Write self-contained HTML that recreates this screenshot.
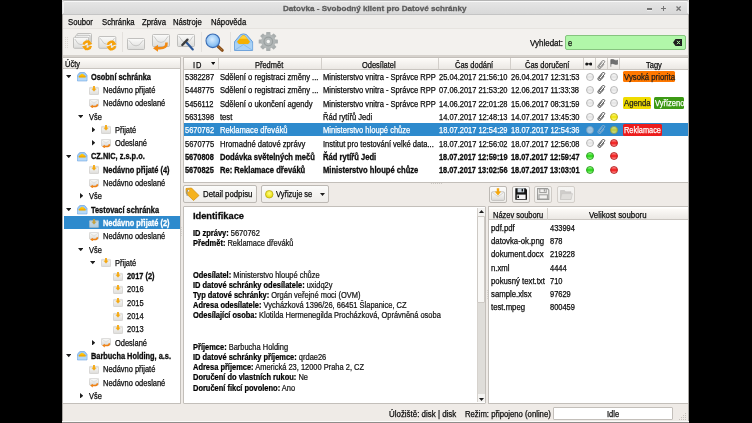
<!DOCTYPE html><html><head><meta charset="utf-8"><style>
*{margin:0;padding:0;box-sizing:border-box}
html,body{width:752px;height:423px;overflow:hidden;background:#000;font-family:"Liberation Sans", sans-serif;font-size:8px;color:#0c0c0c}
.a{position:absolute}
.t{position:absolute;white-space:nowrap;line-height:13.3px;height:13.3px;font-size:8.3px;-webkit-text-stroke:0.25px currentColor;transform:scaleX(0.9) translateZ(0);transform-origin:0 50%;margin-top:1px}
.n{transform:scaleX(0.9) translateZ(0)}
.b{font-weight:bold;-webkit-text-stroke:0.3px currentColor;transform:scaleX(0.89) translateZ(0)}
.win{position:absolute;left:62px;top:0;width:626.5px;height:423px;background:#efebe7;overflow:hidden}
.pan{position:absolute;background:#fff;border:1px solid #c3bfba}
.hdr{position:absolute;background:linear-gradient(#fcfaf7,#ebe8e4);border-top:0.6px solid #fffdfa;border-bottom:1px solid #c9c5c0}
.sep{position:absolute;width:1px;background:#d3cfca}
.btn{position:absolute;border:1px solid #bdb9b4;border-radius:2px;background:linear-gradient(#fbfbfa,#efedea)}
.sel{position:absolute;background:#2e8acd}
.w{color:#fff}
</style></head><body>
<div class="win">
<svg width="0" height="0" style="position:absolute"><defs><linearGradient id="tg" x1="0" y1="0" x2="0" y2="1"><stop offset="0" stop-color="#fbfbfa"/><stop offset="1" stop-color="#dddcd9"/></linearGradient></defs></svg>
<div class="a" style="left:0;top:0;width:626.5px;height:15px;background:linear-gradient(#e6e6e6,#d8d8d8);border-top:1px solid #b4b4b4;border-bottom:0.6px solid #c4c4c4;border-radius:2px 2px 0 0"></div>
<div class="a" style="left:1px;top:1px;width:624.5px;height:12px;border-top:1px solid #f8f8f8;border-left:1px solid #f2f2f2;border-right:1px solid #f2f2f2;border-radius:2px 2px 0 0"></div>
<div class="t b" style="left:221px;top:0.5px;color:#5c5c5c;font-size:8.1px;line-height:13px;transform:translateZ(0)">Datovka - Svobodný klient pro Datové schránky</div>
<div class="a" style="left:584.6px;top:8.4px;width:5.4px;height:1.3px;background:#747474;box-shadow:0 0.8px 0 #f4f4f4"></div>
<div class="a" style="left:599px;top:7.7px;width:5px;height:1.3px;background:#747474"></div>
<div class="a" style="left:600.85px;top:5.8px;width:1.3px;height:5px;background:#747474"></div>
<svg class="a" style="left:613.5px;top:5.8px" width="5.2" height="5.2" viewBox="0 0 5.2 5.2"><path d="M0.5 0.5L4.7 4.7M4.7 0.5L0.5 4.7" stroke="#747474" stroke-width="1.3"/></svg>
<div class="a" style="left:0;top:15px;width:626.5px;height:13px;background:#efedea"></div>
<div class="t" style="left:6.3px;top:14.8px;transform:scaleX(0.93) translateZ(0)">Soubor</div>
<div class="t" style="left:39.6px;top:14.8px;transform:scaleX(0.93) translateZ(0)">Schránka</div>
<div class="t" style="left:79.5px;top:14.8px;transform:scaleX(0.93) translateZ(0)">Zpráva</div>
<div class="t" style="left:111.4px;top:14.8px;transform:scaleX(0.93) translateZ(0)">Nástroje</div>
<div class="t" style="left:149.1px;top:14.8px;transform:scaleX(0.93) translateZ(0)">Nápověda</div>
<div class="a" style="left:0;top:28px;width:626.5px;height:26.6px;background:#f3f1ee;border-top:0.5px solid #e6e3df"></div>
<div class="a" style="left:0;top:54.8px;width:626.5px;height:2.6px;background:#d6d2cd"></div>
<svg class="a" style="left:3.3px;top:37px" width="3" height="12"><rect x="0" y="0" width="1" height="1" fill="#dcd8d3"/><rect x="0" y="2" width="1" height="1" fill="#dcd8d3"/><rect x="0" y="4" width="1" height="1" fill="#dcd8d3"/><rect x="0" y="6" width="1" height="1" fill="#dcd8d3"/><rect x="0" y="8" width="1" height="1" fill="#dcd8d3"/><rect x="0" y="10" width="1" height="1" fill="#dcd8d3"/><rect x="2" y="0" width="1" height="1" fill="#dcd8d3"/><rect x="2" y="2" width="1" height="1" fill="#dcd8d3"/><rect x="2" y="4" width="1" height="1" fill="#dcd8d3"/><rect x="2" y="6" width="1" height="1" fill="#dcd8d3"/><rect x="2" y="8" width="1" height="1" fill="#dcd8d3"/><rect x="2" y="10" width="1" height="1" fill="#dcd8d3"/></svg>
<div class="a" style="left:60px;top:32px;width:1px;height:20px;background:#e3e0dc"></div>
<div class="a" style="left:139px;top:32px;width:1px;height:20px;background:#e3e0dc"></div>
<div class="a" style="left:167.7px;top:32px;width:1px;height:20px;background:#e3e0dc"></div>
<svg class="a" style="left:0;top:0" width="626" height="56"><defs><linearGradient id="eg" x1="0" y1="0" x2="0" y2="1"><stop offset="0" stop-color="#fbfbfa"/><stop offset="1" stop-color="#dcdcda"/></linearGradient><radialGradient id="mg" cx="0.45" cy="0.4" r="0.65"><stop offset="0" stop-color="#d8ecff"/><stop offset="0.7" stop-color="#8ec3f4"/><stop offset="1" stop-color="#5d9ae0"/></radialGradient><radialGradient id="gg" cx="0.5" cy="0.5" r="0.5"><stop offset="0" stop-color="#c8c8c8"/><stop offset="1" stop-color="#8e8e8e"/></radialGradient></defs><rect x="15.0" y="33.5" width="14.5" height="10" rx="1" fill="url(#eg)" stroke="#b2b2b0" stroke-width="0.8"/><path d="M16.3 35.2 L19.46 39.38 Q22.25 40.92 25.04 39.38 L28.2 35.2" fill="none" stroke="#b9b9b7" stroke-width="0.7"/><rect x="13.5" y="35.3" width="14.5" height="10.5" rx="1" fill="url(#eg)" stroke="#b2b2b0" stroke-width="0.8"/><path d="M14.8 37.0 L17.96 41.47 Q20.75 43.08 23.54 41.47 L26.7 37.0" fill="none" stroke="#b9b9b7" stroke-width="0.7"/><rect x="11.5" y="37.3" width="15" height="11" rx="1" fill="url(#eg)" stroke="#b2b2b0" stroke-width="0.8"/><path d="M12.8 39.0 L16.12 43.76 Q19.0 45.44 21.880000000000003 43.76 L25.2 39.0" fill="none" stroke="#b9b9b7" stroke-width="0.7"/><g><circle cx="25.200000000000003" cy="45.3" r="5.2" fill="#fff" opacity="0.35"/><path d="M21.6 44.699999999999996 A3.6 3.6 0 0 1 27.900000000000002 42.852" fill="none" stroke="#f6a10a" stroke-width="2.5"/><path d="M28.800000000000004 45.9 A3.6 3.6 0 0 1 22.500000000000004 47.748" fill="none" stroke="#f6a10a" stroke-width="2.5"/><path d="M26.28 39.8 L30.400000000000006 44.04 L25.560000000000002 45.5 Z" fill="#f6a10a"/><path d="M24.120000000000005 50.8 L20.0 46.559999999999995 L24.840000000000003 45.099999999999994 Z" fill="#f6a10a"/></g><rect x="36.8" y="36.5" width="17" height="11.8" rx="1" fill="url(#eg)" stroke="#b2b2b0" stroke-width="0.8"/><path d="M38.099999999999994 38.2 L42.059999999999995 43.424 Q45.3 45.216 48.54 43.424 L52.5 38.2" fill="none" stroke="#b9b9b7" stroke-width="0.7"/><g><circle cx="49.5" cy="45.5" r="5.2" fill="#fff" opacity="0.35"/><path d="M45.9 44.9 A3.6 3.6 0 0 1 52.2 43.052" fill="none" stroke="#f6a10a" stroke-width="2.5"/><path d="M53.1 46.1 A3.6 3.6 0 0 1 46.8 47.948" fill="none" stroke="#f6a10a" stroke-width="2.5"/><path d="M50.58 40.0 L54.7 44.24 L49.86 45.7 Z" fill="#f6a10a"/><path d="M48.42 51.0 L44.3 46.76 L49.14 45.3 Z" fill="#f6a10a"/></g><rect x="65.5" y="38.5" width="17" height="11" rx="1" fill="url(#eg)" stroke="#b2b2b0" stroke-width="0.8"/><path d="M66.8 40.2 L70.76 44.96 Q74.0 46.64 77.24 44.96 L81.2 40.2" fill="none" stroke="#b9b9b7" stroke-width="0.7"/><rect x="90.5" y="34.5" width="17" height="12" rx="1" fill="url(#eg)" stroke="#b2b2b0" stroke-width="0.8"/><path d="M91.8 36.2 L95.76 41.54 Q99.0 43.36 102.24 41.54 L106.2 36.2" fill="none" stroke="#b9b9b7" stroke-width="0.7"/><path d="M104.5 42.5 Q105 48.3 98 48.3 L95 48.3" fill="none" stroke="#f28a12" stroke-width="2.6"/><path d="M91 48.3 L96 44.8 L96 51.8 Z" fill="#f28a12"/><rect x="115.5" y="34.5" width="17" height="12" rx="1" fill="url(#eg)" stroke="#b2b2b0" stroke-width="0.8"/><path d="M116.8 36.2 L120.76 41.54 Q124.0 43.36 127.24 41.54 L131.2 36.2" fill="none" stroke="#b9b9b7" stroke-width="0.7"/><path d="M124.5 42.5 L130.8 49.5" stroke="#2b5797" stroke-width="2.1" stroke-linecap="round"/><path d="M120.30000000000001 45 L125.5 39.6" stroke="#3c3c3c" stroke-width="2.3" stroke-linecap="round"/><path d="M156 46.3 L160.3 50.3" stroke="#8a4f18" stroke-width="3" stroke-linecap="round"/><path d="M156.6 46.9 L160 50" stroke="#d49a50" stroke-width="1" stroke-dasharray="0.8 0.8"/><circle cx="150.8" cy="40.8" r="6.8" fill="url(#mg)" stroke="#3a6cb4" stroke-width="1.1"/><path d="M172.5 41.8 L178.5 34.6 Q181.5 33.2 184.5 34.6 L190.6 41.8 L190.6 50.4 L172.5 50.4 Z" fill="#9ccaf4" stroke="#5b96d6" stroke-width="0.9"/><path d="M175 41.8 L180.2 35.6 Q181.5 34.6 182.8 35.6 L188 41.8 L186 44.2 L177 44.2 Z" fill="#f5b000"/><path d="M177.5 38.8 L180.6 35.8 Q181.5 35.2 182.4 35.8 L185.5 38.8 Z" fill="#ffd23c"/><path d="M172.8 42.4 L177 44.2 L186 44.2 L190.3 42.4 L190.3 50 L172.8 50 Z" fill="#a9d2f6"/><path d="M173 50 L181.5 44.5 L190 50" fill="none" stroke="#7ab0e6" stroke-width="0.7"/><rect x="204.20000000000002" y="31.9" width="4.2" height="5" rx="0.6" fill="#a9aeae" transform="rotate(0 206.3 41.5)"/><rect x="204.20000000000002" y="31.9" width="4.2" height="5" rx="0.6" fill="#a9aeae" transform="rotate(45 206.3 41.5)"/><rect x="204.20000000000002" y="31.9" width="4.2" height="5" rx="0.6" fill="#a9aeae" transform="rotate(90 206.3 41.5)"/><rect x="204.20000000000002" y="31.9" width="4.2" height="5" rx="0.6" fill="#a9aeae" transform="rotate(135 206.3 41.5)"/><rect x="204.20000000000002" y="31.9" width="4.2" height="5" rx="0.6" fill="#a9aeae" transform="rotate(180 206.3 41.5)"/><rect x="204.20000000000002" y="31.9" width="4.2" height="5" rx="0.6" fill="#a9aeae" transform="rotate(225 206.3 41.5)"/><rect x="204.20000000000002" y="31.9" width="4.2" height="5" rx="0.6" fill="#a9aeae" transform="rotate(270 206.3 41.5)"/><rect x="204.20000000000002" y="31.9" width="4.2" height="5" rx="0.6" fill="#a9aeae" transform="rotate(315 206.3 41.5)"/><circle cx="206.3" cy="41.5" r="7.2" fill="#b2b7b7"/><circle cx="206.3" cy="41.5" r="4.3" fill="none" stroke="#9aa0a0" stroke-width="1.2"/><circle cx="206.3" cy="41.5" r="1.7" fill="#f6f6f4"/></svg>
<div class="t" style="left:468px;top:35.5px;transform:scaleX(0.96) translateZ(0)">Vyhledat:</div>
<div class="a" style="left:503.3px;top:35px;width:120.5px;height:15px;background:#b1f7a9;border:1px solid #86c47f;border-radius:2px"></div>
<div class="t" style="left:505.5px;top:35.8px">e</div>
<svg class="a" style="left:610.5px;top:39px" width="9" height="7" viewBox="0 0 9 7"><path d="M0 3.5 L2.5 0 L9 0 L9 7 L2.5 7 Z" fill="#1e1e1e"/><path d="M4 1.8 L7 5.2 M7 1.8 L4 5.2" stroke="#b1f7a9" stroke-width="1"/></svg>
<div class="pan" style="left:0px;top:56.8px;width:118.5px;height:347.5px;border-left:none;border-radius:0 1px 1px 0"></div>
<div class="hdr" style="left:0px;top:57.8px;width:117.5px;height:11.7px"></div>
<div class="t" style="left:2.5px;top:56.6px">Účty</div>
<svg class="a" style="left:3.7px;top:74.95px" width="5.5" height="3.5" viewBox="0 0 5.5 3.5"><path d="M0 0 L5.5 0 L2.75 3.2 Z" fill="#1e1e1e"/></svg>
<svg class="a" style="left:15px;top:71.85px" width="10.5" height="10" viewBox="0 0 10.5 10"><path d="M0.4 3.4 L2.3 0.9 Q2.6 0.5 3.1 0.5 L7.3 0.5 Q7.8 0.5 8.1 0.9 L10 3.4 L10 8.9 L0.4 8.9 Z" fill="#9ccaf5" stroke="#6ea4e0" stroke-width="0.7"/><path d="M1.3 4.9 Q2.4 3 3.9 2.4 Q5.1 1.1 6.3 2.4 Q8 3 9.1 4.9 L8.3 5.7 L2.1 5.7 Z" fill="#f7ac00"/><path d="M2.8 3.4 Q4.2 2.2 5.2 1.9 Q6.2 2.2 7.4 3.4 Z" fill="#ffd21a"/><path d="M0.7 5.1 L2.1 5.7 L8.3 5.7 L9.7 5.1 L9.7 8.6 L0.7 8.6 Z" fill="#b5d9f8"/></svg>
<div class="t b" style="left:28.8px;top:69.60px">Osobní schránka</div>
<svg class="a" style="left:27px;top:85.55px" width="10" height="9" viewBox="0 0 10 9"><rect x="0.4" y="1.4" width="9.2" height="7.2" rx="0.9" fill="url(#tg)" stroke="#c2c1bd" stroke-width="0.6"/><path d="M0.8 2 L5 5.2 L9.2 2" fill="none" stroke="#cfcecb" stroke-width="0.5"/><path d="M4.1 0 L5.9 0 L5.9 2.6 L7.5 2.6 L5 5.6 L2.5 2.6 L4.1 2.6 Z" fill="#f5a80e"/></svg>
<div class="t" style="left:40.9px;top:82.90px">Nedávno přijaté</div>
<svg class="a" style="left:27px;top:98.75px" width="10" height="9.6" viewBox="0 0 10 9.6"><rect x="0.4" y="0.4" width="9.2" height="6.8" rx="0.9" fill="url(#tg)" stroke="#c2c1bd" stroke-width="0.6"/><path d="M0.8 1 L5 4.2 L9.2 1" fill="none" stroke="#cfcecb" stroke-width="0.5"/><path d="M8.4 5.2 Q8.4 7.6 5.6 7.6 L3.4 7.6" fill="none" stroke="#f08010" stroke-width="1.5"/><path d="M1.2 7.6 L3.8 5.8 L3.8 9.4 Z" fill="#f08010"/></svg>
<div class="t" style="left:40.9px;top:96.20px">Nedávno odeslané</div>
<svg class="a" style="left:15.7px;top:114.85px" width="5.5" height="3.5" viewBox="0 0 5.5 3.5"><path d="M0 0 L5.5 0 L2.75 3.2 Z" fill="#1e1e1e"/></svg>
<div class="t" style="left:26.7px;top:109.50px">Vše</div>
<svg class="a" style="left:29.5px;top:126.69999999999999px" width="3.5" height="5.5" viewBox="0 0 3.5 5.5"><path d="M0 0 L0 5.5 L3.2 2.75 Z" fill="#1e1e1e"/></svg>
<svg class="a" style="left:39px;top:125.45px" width="10" height="9" viewBox="0 0 10 9"><rect x="0.4" y="1.4" width="9.2" height="7.2" rx="0.9" fill="url(#tg)" stroke="#c2c1bd" stroke-width="0.6"/><path d="M0.8 2 L5 5.2 L9.2 2" fill="none" stroke="#cfcecb" stroke-width="0.5"/><path d="M4.1 0 L5.9 0 L5.9 2.6 L7.5 2.6 L5 5.6 L2.5 2.6 L4.1 2.6 Z" fill="#f5a80e"/></svg>
<div class="t" style="left:52.5px;top:122.80px">Přijaté</div>
<svg class="a" style="left:29.5px;top:140.0px" width="3.5" height="5.5" viewBox="0 0 3.5 5.5"><path d="M0 0 L0 5.5 L3.2 2.75 Z" fill="#1e1e1e"/></svg>
<svg class="a" style="left:39px;top:138.65px" width="10" height="9.6" viewBox="0 0 10 9.6"><rect x="0.4" y="0.4" width="9.2" height="6.8" rx="0.9" fill="url(#tg)" stroke="#c2c1bd" stroke-width="0.6"/><path d="M0.8 1 L5 4.2 L9.2 1" fill="none" stroke="#cfcecb" stroke-width="0.5"/><path d="M8.4 5.2 Q8.4 7.6 5.6 7.6 L3.4 7.6" fill="none" stroke="#f08010" stroke-width="1.5"/><path d="M1.2 7.6 L3.8 5.8 L3.8 9.4 Z" fill="#f08010"/></svg>
<div class="t" style="left:52.5px;top:136.10px">Odeslané</div>
<svg class="a" style="left:3.7px;top:154.75px" width="5.5" height="3.5" viewBox="0 0 5.5 3.5"><path d="M0 0 L5.5 0 L2.75 3.2 Z" fill="#1e1e1e"/></svg>
<svg class="a" style="left:15px;top:151.65px" width="10.5" height="10" viewBox="0 0 10.5 10"><path d="M0.4 3.4 L2.3 0.9 Q2.6 0.5 3.1 0.5 L7.3 0.5 Q7.8 0.5 8.1 0.9 L10 3.4 L10 8.9 L0.4 8.9 Z" fill="#9ccaf5" stroke="#6ea4e0" stroke-width="0.7"/><path d="M1.3 4.9 Q2.4 3 3.9 2.4 Q5.1 1.1 6.3 2.4 Q8 3 9.1 4.9 L8.3 5.7 L2.1 5.7 Z" fill="#f7ac00"/><path d="M2.8 3.4 Q4.2 2.2 5.2 1.9 Q6.2 2.2 7.4 3.4 Z" fill="#ffd21a"/><path d="M0.7 5.1 L2.1 5.7 L8.3 5.7 L9.7 5.1 L9.7 8.6 L0.7 8.6 Z" fill="#b5d9f8"/></svg>
<div class="t b" style="left:28.8px;top:149.40px">CZ.NIC, z.s.p.o.</div>
<svg class="a" style="left:27px;top:165.35px" width="10" height="9" viewBox="0 0 10 9"><rect x="0.4" y="1.4" width="9.2" height="7.2" rx="0.9" fill="url(#tg)" stroke="#c2c1bd" stroke-width="0.6"/><path d="M0.8 2 L5 5.2 L9.2 2" fill="none" stroke="#cfcecb" stroke-width="0.5"/><path d="M4.1 0 L5.9 0 L5.9 2.6 L7.5 2.6 L5 5.6 L2.5 2.6 L4.1 2.6 Z" fill="#f5a80e"/></svg>
<div class="t b" style="left:40.9px;top:162.70px">Nedávno přijaté (4)</div>
<svg class="a" style="left:27px;top:178.55px" width="10" height="9.6" viewBox="0 0 10 9.6"><rect x="0.4" y="0.4" width="9.2" height="6.8" rx="0.9" fill="url(#tg)" stroke="#c2c1bd" stroke-width="0.6"/><path d="M0.8 1 L5 4.2 L9.2 1" fill="none" stroke="#cfcecb" stroke-width="0.5"/><path d="M8.4 5.2 Q8.4 7.6 5.6 7.6 L3.4 7.6" fill="none" stroke="#f08010" stroke-width="1.5"/><path d="M1.2 7.6 L3.8 5.8 L3.8 9.4 Z" fill="#f08010"/></svg>
<div class="t" style="left:40.9px;top:176.00px">Nedávno odeslané</div>
<svg class="a" style="left:17.5px;top:193.20000000000002px" width="3.5" height="5.5" viewBox="0 0 3.5 5.5"><path d="M0 0 L0 5.5 L3.2 2.75 Z" fill="#1e1e1e"/></svg>
<div class="t" style="left:26.7px;top:189.30px">Vše</div>
<svg class="a" style="left:3.7px;top:207.95px" width="5.5" height="3.5" viewBox="0 0 5.5 3.5"><path d="M0 0 L5.5 0 L2.75 3.2 Z" fill="#1e1e1e"/></svg>
<svg class="a" style="left:15px;top:204.85px" width="10.5" height="10" viewBox="0 0 10.5 10"><path d="M0.4 3.4 L2.3 0.9 Q2.6 0.5 3.1 0.5 L7.3 0.5 Q7.8 0.5 8.1 0.9 L10 3.4 L10 8.9 L0.4 8.9 Z" fill="#9ccaf5" stroke="#6ea4e0" stroke-width="0.7"/><path d="M1.3 4.9 Q2.4 3 3.9 2.4 Q5.1 1.1 6.3 2.4 Q8 3 9.1 4.9 L8.3 5.7 L2.1 5.7 Z" fill="#f7ac00"/><path d="M2.8 3.4 Q4.2 2.2 5.2 1.9 Q6.2 2.2 7.4 3.4 Z" fill="#ffd21a"/><path d="M0.7 5.1 L2.1 5.7 L8.3 5.7 L9.7 5.1 L9.7 8.6 L0.7 8.6 Z" fill="#b5d9f8"/></svg>
<div class="t b" style="left:28.8px;top:202.60px">Testovací schránka</div>
<div class="sel" style="left:1.5px;top:216.10px;width:116px;height:12.90px"></div>
<div style="opacity:0.75">
<svg class="a" style="left:27px;top:218.55px" width="10" height="9" viewBox="0 0 10 9"><rect x="0.4" y="1.4" width="9.2" height="7.2" rx="0.9" fill="url(#tg)" stroke="#c2c1bd" stroke-width="0.6"/><path d="M0.8 2 L5 5.2 L9.2 2" fill="none" stroke="#cfcecb" stroke-width="0.5"/><path d="M4.1 0 L5.9 0 L5.9 2.6 L7.5 2.6 L5 5.6 L2.5 2.6 L4.1 2.6 Z" fill="#f5a80e"/></svg>
</div>
<div class="t b w" style="left:40.9px;top:215.90px">Nedávno přijaté (2)</div>
<svg class="a" style="left:27px;top:231.75px" width="10" height="9.6" viewBox="0 0 10 9.6"><rect x="0.4" y="0.4" width="9.2" height="6.8" rx="0.9" fill="url(#tg)" stroke="#c2c1bd" stroke-width="0.6"/><path d="M0.8 1 L5 4.2 L9.2 1" fill="none" stroke="#cfcecb" stroke-width="0.5"/><path d="M8.4 5.2 Q8.4 7.6 5.6 7.6 L3.4 7.6" fill="none" stroke="#f08010" stroke-width="1.5"/><path d="M1.2 7.6 L3.8 5.8 L3.8 9.4 Z" fill="#f08010"/></svg>
<div class="t" style="left:40.9px;top:229.20px">Nedávno odeslané</div>
<svg class="a" style="left:15.7px;top:247.85px" width="5.5" height="3.5" viewBox="0 0 5.5 3.5"><path d="M0 0 L5.5 0 L2.75 3.2 Z" fill="#1e1e1e"/></svg>
<div class="t" style="left:26.7px;top:242.50px">Vše</div>
<svg class="a" style="left:27.7px;top:261.15px" width="5.5" height="3.5" viewBox="0 0 5.5 3.5"><path d="M0 0 L5.5 0 L2.75 3.2 Z" fill="#1e1e1e"/></svg>
<svg class="a" style="left:39px;top:258.45px" width="10" height="9" viewBox="0 0 10 9"><rect x="0.4" y="1.4" width="9.2" height="7.2" rx="0.9" fill="url(#tg)" stroke="#c2c1bd" stroke-width="0.6"/><path d="M0.8 2 L5 5.2 L9.2 2" fill="none" stroke="#cfcecb" stroke-width="0.5"/><path d="M4.1 0 L5.9 0 L5.9 2.6 L7.5 2.6 L5 5.6 L2.5 2.6 L4.1 2.6 Z" fill="#f5a80e"/></svg>
<div class="t" style="left:52.5px;top:255.80px">Přijaté</div>
<svg class="a" style="left:51px;top:271.75px" width="10" height="9" viewBox="0 0 10 9"><rect x="0.4" y="1.4" width="9.2" height="7.2" rx="0.9" fill="url(#tg)" stroke="#c2c1bd" stroke-width="0.6"/><path d="M0.8 2 L5 5.2 L9.2 2" fill="none" stroke="#cfcecb" stroke-width="0.5"/><path d="M4.1 0 L5.9 0 L5.9 2.6 L7.5 2.6 L5 5.6 L2.5 2.6 L4.1 2.6 Z" fill="#f5a80e"/></svg>
<div class="t b" style="left:64.5px;top:269.10px">2017 (2)</div>
<svg class="a" style="left:51px;top:285.05px" width="10" height="9" viewBox="0 0 10 9"><rect x="0.4" y="1.4" width="9.2" height="7.2" rx="0.9" fill="url(#tg)" stroke="#c2c1bd" stroke-width="0.6"/><path d="M0.8 2 L5 5.2 L9.2 2" fill="none" stroke="#cfcecb" stroke-width="0.5"/><path d="M4.1 0 L5.9 0 L5.9 2.6 L7.5 2.6 L5 5.6 L2.5 2.6 L4.1 2.6 Z" fill="#f5a80e"/></svg>
<div class="t" style="left:64.5px;top:282.40px">2016</div>
<svg class="a" style="left:51px;top:298.35px" width="10" height="9" viewBox="0 0 10 9"><rect x="0.4" y="1.4" width="9.2" height="7.2" rx="0.9" fill="url(#tg)" stroke="#c2c1bd" stroke-width="0.6"/><path d="M0.8 2 L5 5.2 L9.2 2" fill="none" stroke="#cfcecb" stroke-width="0.5"/><path d="M4.1 0 L5.9 0 L5.9 2.6 L7.5 2.6 L5 5.6 L2.5 2.6 L4.1 2.6 Z" fill="#f5a80e"/></svg>
<div class="t" style="left:64.5px;top:295.70px">2015</div>
<svg class="a" style="left:51px;top:311.65px" width="10" height="9" viewBox="0 0 10 9"><rect x="0.4" y="1.4" width="9.2" height="7.2" rx="0.9" fill="url(#tg)" stroke="#c2c1bd" stroke-width="0.6"/><path d="M0.8 2 L5 5.2 L9.2 2" fill="none" stroke="#cfcecb" stroke-width="0.5"/><path d="M4.1 0 L5.9 0 L5.9 2.6 L7.5 2.6 L5 5.6 L2.5 2.6 L4.1 2.6 Z" fill="#f5a80e"/></svg>
<div class="t" style="left:64.5px;top:309.00px">2014</div>
<svg class="a" style="left:51px;top:324.95px" width="10" height="9" viewBox="0 0 10 9"><rect x="0.4" y="1.4" width="9.2" height="7.2" rx="0.9" fill="url(#tg)" stroke="#c2c1bd" stroke-width="0.6"/><path d="M0.8 2 L5 5.2 L9.2 2" fill="none" stroke="#cfcecb" stroke-width="0.5"/><path d="M4.1 0 L5.9 0 L5.9 2.6 L7.5 2.6 L5 5.6 L2.5 2.6 L4.1 2.6 Z" fill="#f5a80e"/></svg>
<div class="t" style="left:64.5px;top:322.30px">2013</div>
<svg class="a" style="left:29.5px;top:339.5px" width="3.5" height="5.5" viewBox="0 0 3.5 5.5"><path d="M0 0 L0 5.5 L3.2 2.75 Z" fill="#1e1e1e"/></svg>
<svg class="a" style="left:39px;top:338.15px" width="10" height="9.6" viewBox="0 0 10 9.6"><rect x="0.4" y="0.4" width="9.2" height="6.8" rx="0.9" fill="url(#tg)" stroke="#c2c1bd" stroke-width="0.6"/><path d="M0.8 1 L5 4.2 L9.2 1" fill="none" stroke="#cfcecb" stroke-width="0.5"/><path d="M8.4 5.2 Q8.4 7.6 5.6 7.6 L3.4 7.6" fill="none" stroke="#f08010" stroke-width="1.5"/><path d="M1.2 7.6 L3.8 5.8 L3.8 9.4 Z" fill="#f08010"/></svg>
<div class="t" style="left:52.5px;top:335.60px">Odeslané</div>
<svg class="a" style="left:3.7px;top:354.25px" width="5.5" height="3.5" viewBox="0 0 5.5 3.5"><path d="M0 0 L5.5 0 L2.75 3.2 Z" fill="#1e1e1e"/></svg>
<svg class="a" style="left:15px;top:351.15px" width="10.5" height="10" viewBox="0 0 10.5 10"><path d="M0.4 3.4 L2.3 0.9 Q2.6 0.5 3.1 0.5 L7.3 0.5 Q7.8 0.5 8.1 0.9 L10 3.4 L10 8.9 L0.4 8.9 Z" fill="#9ccaf5" stroke="#6ea4e0" stroke-width="0.7"/><path d="M1.3 4.9 Q2.4 3 3.9 2.4 Q5.1 1.1 6.3 2.4 Q8 3 9.1 4.9 L8.3 5.7 L2.1 5.7 Z" fill="#f7ac00"/><path d="M2.8 3.4 Q4.2 2.2 5.2 1.9 Q6.2 2.2 7.4 3.4 Z" fill="#ffd21a"/><path d="M0.7 5.1 L2.1 5.7 L8.3 5.7 L9.7 5.1 L9.7 8.6 L0.7 8.6 Z" fill="#b5d9f8"/></svg>
<div class="t b" style="left:28.8px;top:348.90px">Barbucha Holding, a.s.</div>
<svg class="a" style="left:27px;top:364.85px" width="10" height="9" viewBox="0 0 10 9"><rect x="0.4" y="1.4" width="9.2" height="7.2" rx="0.9" fill="url(#tg)" stroke="#c2c1bd" stroke-width="0.6"/><path d="M0.8 2 L5 5.2 L9.2 2" fill="none" stroke="#cfcecb" stroke-width="0.5"/><path d="M4.1 0 L5.9 0 L5.9 2.6 L7.5 2.6 L5 5.6 L2.5 2.6 L4.1 2.6 Z" fill="#f5a80e"/></svg>
<div class="t" style="left:40.9px;top:362.20px">Nedávno přijaté</div>
<svg class="a" style="left:27px;top:378.05px" width="10" height="9.6" viewBox="0 0 10 9.6"><rect x="0.4" y="0.4" width="9.2" height="6.8" rx="0.9" fill="url(#tg)" stroke="#c2c1bd" stroke-width="0.6"/><path d="M0.8 1 L5 4.2 L9.2 1" fill="none" stroke="#cfcecb" stroke-width="0.5"/><path d="M8.4 5.2 Q8.4 7.6 5.6 7.6 L3.4 7.6" fill="none" stroke="#f08010" stroke-width="1.5"/><path d="M1.2 7.6 L3.8 5.8 L3.8 9.4 Z" fill="#f08010"/></svg>
<div class="t" style="left:40.9px;top:375.50px">Nedávno odeslané</div>
<svg class="a" style="left:17.5px;top:392.70000000000005px" width="3.5" height="5.5" viewBox="0 0 3.5 5.5"><path d="M0 0 L0 5.5 L3.2 2.75 Z" fill="#1e1e1e"/></svg>
<div class="t" style="left:26.7px;top:388.80px">Vše</div>
<div class="pan" style="left:121px;top:56.8px;width:505.5px;height:125.8px;border-right:none;border-radius:1px 0 0 1px"></div>
<div class="hdr" style="left:122px;top:57.5px;width:504.5px;height:12px"></div>
<div class="sep" style="left:156.1px;top:58px;height:11px"></div>
<div class="sep" style="left:258.8px;top:58px;height:11px"></div>
<div class="sep" style="left:375.5px;top:58px;height:11px"></div>
<div class="sep" style="left:447.8px;top:58px;height:11px"></div>
<div class="sep" style="left:521.4px;top:58px;height:11px"></div>
<div class="sep" style="left:532.7px;top:58px;height:11px"></div>
<div class="sep" style="left:545.4px;top:58px;height:11px"></div>
<div class="sep" style="left:557.3px;top:58px;height:11px"></div>
<div class="t" style="left:130.7px;top:57.5px;letter-spacing:0.9px">ID</div>
<div class="t" style="left:193.1px;top:57.5px">Předmět</div>
<div class="t" style="left:300.0px;top:57.5px">Odesílatel</div>
<div class="t" style="left:392.7px;top:57.5px">Čas dodání</div>
<div class="t" style="left:462.5px;top:57.5px">Čas doručení</div>
<div class="t" style="left:583.7px;top:57.5px">Tagy</div>
<svg class="a" style="left:149px;top:62px" width="4.4" height="3" viewBox="0 0 4.4 3"><path d="M0 0 L4.4 0 L2.2 2.9 Z" fill="#111"/></svg>
<svg class="a" style="left:522.8px;top:61.8px" width="7.5" height="4" viewBox="0 0 7.5 4"><circle cx="1.8" cy="2" r="1.6" fill="#1a1a1a"/><circle cx="5.7" cy="2" r="1.6" fill="#1a1a1a"/><rect x="1.8" y="1.4" width="3.9" height="0.9" fill="#1a1a1a"/></svg>
<svg class="a" style="left:534.8px;top:59.50px;opacity:1" width="9" height="9" viewBox="0 0 9 9"><g transform="rotate(40 4.5 4.5)"><path d="M3.6 2.4 L3.6 6.6 Q3.6 7.6 4.5 7.6 Q5.4 7.6 5.4 6.6 L5.4 1.2 Q5.4 -0.2 4.2 -0.2 Q2.8 -0.2 2.8 1.2 L2.8 7.2 Q2.8 9.2 4.5 9.2 Q6.2 9.2 6.2 7.2 L6.2 2.6" fill="none" stroke="#6a6a6a" stroke-width="0.75"/></g></svg>
<svg class="a" style="left:547.8px;top:59px" width="8" height="8" viewBox="0 0 8 8"><path d="M0.8 0.5 L0.8 7.8" stroke="#777" stroke-width="0.8"/><path d="M1 0.5 Q3 -0.2 4.5 1 Q6 1.8 7.8 1 L7.8 5.2 Q6 6 4.5 5.2 Q3 4.2 1 5 Z" fill="#707070" stroke="#5a5a5a" stroke-width="0.4"/></svg>
<div class="t" style="left:123.0px;top:70.00px">5382287</div>
<div class="t" style="left:157.89999999999998px;top:70.00px;transform:scaleX(0.92) translateZ(0)">Sdělení o registraci změny ...</div>
<div class="t" style="left:260.5px;top:70.00px;transform:scaleX(0.91) translateZ(0)">Ministerstvo vnitra - Správce RPP</div>
<div class="t" style="left:377.4px;top:70.00px">25.04.2017 21:56:10</div>
<div class="t" style="left:449.09999999999997px;top:70.00px">26.04.2017 12:31:53</div>
<svg class="a" style="left:524.2px;top:72.65px;opacity:1" width="8" height="8" viewBox="0 0 8 8"><defs><linearGradient id="cg_gray" x1="0" y1="0" x2="0" y2="1"><stop offset="0" stop-color="#ffffff"/><stop offset="0.5" stop-color="#e2e2e2"/><stop offset="1" stop-color="#ffffff"/></linearGradient></defs><circle cx="4" cy="4" r="3.5" fill="url(#cg_gray)" stroke="#a8a8a8" stroke-width="0.8"/></svg>
<svg class="a" style="left:534.8px;top:72.05px;opacity:1" width="9" height="9" viewBox="0 0 9 9"><g transform="rotate(40 4.5 4.5)"><path d="M3.6 2.4 L3.6 6.6 Q3.6 7.6 4.5 7.6 Q5.4 7.6 5.4 6.6 L5.4 1.2 Q5.4 -0.2 4.2 -0.2 Q2.8 -0.2 2.8 1.2 L2.8 7.2 Q2.8 9.2 4.5 9.2 Q6.2 9.2 6.2 7.2 L6.2 2.6" fill="none" stroke="#2a2a2a" stroke-width="0.75"/></g></svg>
<svg class="a" style="left:548px;top:72.65px;opacity:1" width="8" height="8" viewBox="0 0 8 8"><defs><linearGradient id="cg_gray" x1="0" y1="0" x2="0" y2="1"><stop offset="0" stop-color="#ffffff"/><stop offset="0.5" stop-color="#e2e2e2"/><stop offset="1" stop-color="#ffffff"/></linearGradient></defs><circle cx="4" cy="4" r="3.5" fill="url(#cg_gray)" stroke="#a8a8a8" stroke-width="0.8"/></svg>
<div class="a" style="left:561.1px;top:70.60px;width:52.2px;height:11.8px;background:#ff7800;border-radius:1.5px"></div>
<div class="t" style="left:562.0px;top:69.70px;color:#1e1e1e;transform:scaleX(0.935) translateZ(0)">Vysoká priorita</div>
<div class="t" style="left:123.0px;top:83.30px">5448775</div>
<div class="t" style="left:157.89999999999998px;top:83.30px;transform:scaleX(0.92) translateZ(0)">Sdělení o registraci změny ...</div>
<div class="t" style="left:260.5px;top:83.30px;transform:scaleX(0.91) translateZ(0)">Ministerstvo vnitra - Správce RPP</div>
<div class="t" style="left:377.4px;top:83.30px">07.06.2017 21:53:20</div>
<div class="t" style="left:449.09999999999997px;top:83.30px">12.06.2017 11:33:38</div>
<svg class="a" style="left:524.2px;top:85.95px;opacity:1" width="8" height="8" viewBox="0 0 8 8"><defs><linearGradient id="cg_gray" x1="0" y1="0" x2="0" y2="1"><stop offset="0" stop-color="#ffffff"/><stop offset="0.5" stop-color="#e2e2e2"/><stop offset="1" stop-color="#ffffff"/></linearGradient></defs><circle cx="4" cy="4" r="3.5" fill="url(#cg_gray)" stroke="#a8a8a8" stroke-width="0.8"/></svg>
<svg class="a" style="left:534.8px;top:85.35px;opacity:1" width="9" height="9" viewBox="0 0 9 9"><g transform="rotate(40 4.5 4.5)"><path d="M3.6 2.4 L3.6 6.6 Q3.6 7.6 4.5 7.6 Q5.4 7.6 5.4 6.6 L5.4 1.2 Q5.4 -0.2 4.2 -0.2 Q2.8 -0.2 2.8 1.2 L2.8 7.2 Q2.8 9.2 4.5 9.2 Q6.2 9.2 6.2 7.2 L6.2 2.6" fill="none" stroke="#2a2a2a" stroke-width="0.75"/></g></svg>
<svg class="a" style="left:548px;top:85.95px;opacity:1" width="8" height="8" viewBox="0 0 8 8"><defs><linearGradient id="cg_gray" x1="0" y1="0" x2="0" y2="1"><stop offset="0" stop-color="#ffffff"/><stop offset="0.5" stop-color="#e2e2e2"/><stop offset="1" stop-color="#ffffff"/></linearGradient></defs><circle cx="4" cy="4" r="3.5" fill="url(#cg_gray)" stroke="#a8a8a8" stroke-width="0.8"/></svg>
<div class="t" style="left:123.0px;top:96.60px">5456112</div>
<div class="t" style="left:157.89999999999998px;top:96.60px;transform:scaleX(0.92) translateZ(0)">Sdělení o ukončení agendy</div>
<div class="t" style="left:260.5px;top:96.60px;transform:scaleX(0.91) translateZ(0)">Ministerstvo vnitra - Správce RPP</div>
<div class="t" style="left:377.4px;top:96.60px">14.06.2017 22:01:28</div>
<div class="t" style="left:449.09999999999997px;top:96.60px">15.06.2017 08:31:59</div>
<svg class="a" style="left:524.2px;top:99.25px;opacity:1" width="8" height="8" viewBox="0 0 8 8"><defs><linearGradient id="cg_gray" x1="0" y1="0" x2="0" y2="1"><stop offset="0" stop-color="#ffffff"/><stop offset="0.5" stop-color="#e2e2e2"/><stop offset="1" stop-color="#ffffff"/></linearGradient></defs><circle cx="4" cy="4" r="3.5" fill="url(#cg_gray)" stroke="#a8a8a8" stroke-width="0.8"/></svg>
<svg class="a" style="left:534.8px;top:98.65px;opacity:1" width="9" height="9" viewBox="0 0 9 9"><g transform="rotate(40 4.5 4.5)"><path d="M3.6 2.4 L3.6 6.6 Q3.6 7.6 4.5 7.6 Q5.4 7.6 5.4 6.6 L5.4 1.2 Q5.4 -0.2 4.2 -0.2 Q2.8 -0.2 2.8 1.2 L2.8 7.2 Q2.8 9.2 4.5 9.2 Q6.2 9.2 6.2 7.2 L6.2 2.6" fill="none" stroke="#2a2a2a" stroke-width="0.75"/></g></svg>
<svg class="a" style="left:548px;top:99.25px;opacity:1" width="8" height="8" viewBox="0 0 8 8"><defs><linearGradient id="cg_gray" x1="0" y1="0" x2="0" y2="1"><stop offset="0" stop-color="#ffffff"/><stop offset="0.5" stop-color="#e2e2e2"/><stop offset="1" stop-color="#ffffff"/></linearGradient></defs><circle cx="4" cy="4" r="3.5" fill="url(#cg_gray)" stroke="#a8a8a8" stroke-width="0.8"/></svg>
<div class="a" style="left:561.1px;top:97.20px;width:27.9px;height:11.8px;background:#f0dc00;border-radius:1.5px"></div>
<div class="t" style="left:562.0px;top:96.30px;color:#1e1e1e;transform:scaleX(0.93) translateZ(0)">Agenda</div>
<div class="a" style="left:592.0px;top:97.20px;width:30.2px;height:11.8px;background:#3c9a14;border-radius:1.5px"></div>
<div class="t" style="left:592.9px;top:96.30px;color:#ffffff;transform:scaleX(0.905) translateZ(0)">Vyřízeno</div>
<div class="t" style="left:123.0px;top:109.90px">5631398</div>
<div class="t" style="left:157.89999999999998px;top:109.90px;transform:scaleX(0.92) translateZ(0)">test</div>
<div class="t" style="left:260.5px;top:109.90px;transform:scaleX(0.91) translateZ(0)">Řád rytířů Jedi</div>
<div class="t" style="left:377.4px;top:109.90px">14.07.2017 12:48:13</div>
<div class="t" style="left:449.09999999999997px;top:109.90px">14.07.2017 13:45:30</div>
<svg class="a" style="left:524.2px;top:112.55px;opacity:1" width="8" height="8" viewBox="0 0 8 8"><defs><linearGradient id="cg_gray" x1="0" y1="0" x2="0" y2="1"><stop offset="0" stop-color="#ffffff"/><stop offset="0.5" stop-color="#e2e2e2"/><stop offset="1" stop-color="#ffffff"/></linearGradient></defs><circle cx="4" cy="4" r="3.5" fill="url(#cg_gray)" stroke="#a8a8a8" stroke-width="0.8"/></svg>
<svg class="a" style="left:534.8px;top:111.95px;opacity:1" width="9" height="9" viewBox="0 0 9 9"><g transform="rotate(40 4.5 4.5)"><path d="M3.6 2.4 L3.6 6.6 Q3.6 7.6 4.5 7.6 Q5.4 7.6 5.4 6.6 L5.4 1.2 Q5.4 -0.2 4.2 -0.2 Q2.8 -0.2 2.8 1.2 L2.8 7.2 Q2.8 9.2 4.5 9.2 Q6.2 9.2 6.2 7.2 L6.2 2.6" fill="none" stroke="#2a2a2a" stroke-width="0.75"/></g></svg>
<svg class="a" style="left:548px;top:112.55px;opacity:1" width="8" height="8" viewBox="0 0 8 8"><defs><linearGradient id="cg_yellow" x1="0" y1="0" x2="0" y2="1"><stop offset="0" stop-color="#ffffa0"/><stop offset="0.5" stop-color="#efe100"/><stop offset="1" stop-color="#ffffa0"/></linearGradient></defs><circle cx="4" cy="4" r="3.5" fill="url(#cg_yellow)" stroke="#b5a400" stroke-width="0.8"/></svg>
<div class="sel" style="left:122px;top:123.00px;width:504.5px;height:13.30px"></div>
<div class="t w" style="left:123.0px;top:123.20px">5670762</div>
<div class="t w" style="left:157.89999999999998px;top:123.20px;transform:scaleX(0.92) translateZ(0)">Reklamace dřeváků</div>
<div class="t w" style="left:260.5px;top:123.20px;transform:scaleX(0.91) translateZ(0)">Ministerstvo hloupé chůze</div>
<div class="t w" style="left:377.4px;top:123.20px">18.07.2017 12:54:29</div>
<div class="t w" style="left:449.09999999999997px;top:123.20px">18.07.2017 12:54:36</div>
<svg class="a" style="left:524.2px;top:125.85px;opacity:0.6" width="8" height="8" viewBox="0 0 8 8"><defs><linearGradient id="cg_gray" x1="0" y1="0" x2="0" y2="1"><stop offset="0" stop-color="#ffffff"/><stop offset="0.5" stop-color="#e2e2e2"/><stop offset="1" stop-color="#ffffff"/></linearGradient></defs><circle cx="4" cy="4" r="3.5" fill="url(#cg_gray)" stroke="#a8a8a8" stroke-width="0.8"/></svg>
<svg class="a" style="left:534.8px;top:125.25px;opacity:1" width="9" height="9" viewBox="0 0 9 9"><g transform="rotate(40 4.5 4.5)"><path d="M3.6 2.4 L3.6 6.6 Q3.6 7.6 4.5 7.6 Q5.4 7.6 5.4 6.6 L5.4 1.2 Q5.4 -0.2 4.2 -0.2 Q2.8 -0.2 2.8 1.2 L2.8 7.2 Q2.8 9.2 4.5 9.2 Q6.2 9.2 6.2 7.2 L6.2 2.6" fill="none" stroke="#9fb8d0" stroke-width="0.75"/></g></svg>
<svg class="a" style="left:548px;top:125.85px;opacity:0.75" width="8" height="8" viewBox="0 0 8 8"><defs><linearGradient id="cg_yellow" x1="0" y1="0" x2="0" y2="1"><stop offset="0" stop-color="#ffffa0"/><stop offset="0.5" stop-color="#efe100"/><stop offset="1" stop-color="#ffffa0"/></linearGradient></defs><circle cx="4" cy="4" r="3.5" fill="url(#cg_yellow)" stroke="#b5a400" stroke-width="0.8"/></svg>
<div class="a" style="left:561.1px;top:123.80px;width:38.5px;height:11.8px;background:#ec1c1c;border-radius:1.5px"></div>
<div class="t" style="left:562.0px;top:122.90px;color:#ffffff;transform:scaleX(0.89) translateZ(0)">Reklamace</div>
<div class="t" style="left:123.0px;top:136.50px">5670775</div>
<div class="t" style="left:157.89999999999998px;top:136.50px;transform:scaleX(0.92) translateZ(0)">Hromadné datové zprávy</div>
<div class="t" style="left:260.5px;top:136.50px;transform:scaleX(0.91) translateZ(0)">Institut pro testování velké data...</div>
<div class="t" style="left:377.4px;top:136.50px">18.07.2017 12:56:02</div>
<div class="t" style="left:449.09999999999997px;top:136.50px">18.07.2017 12:56:08</div>
<svg class="a" style="left:524.2px;top:139.15px;opacity:1" width="8" height="8" viewBox="0 0 8 8"><defs><linearGradient id="cg_gray" x1="0" y1="0" x2="0" y2="1"><stop offset="0" stop-color="#ffffff"/><stop offset="0.5" stop-color="#e2e2e2"/><stop offset="1" stop-color="#ffffff"/></linearGradient></defs><circle cx="4" cy="4" r="3.5" fill="url(#cg_gray)" stroke="#a8a8a8" stroke-width="0.8"/></svg>
<svg class="a" style="left:534.8px;top:138.55px;opacity:1" width="9" height="9" viewBox="0 0 9 9"><g transform="rotate(40 4.5 4.5)"><path d="M3.6 2.4 L3.6 6.6 Q3.6 7.6 4.5 7.6 Q5.4 7.6 5.4 6.6 L5.4 1.2 Q5.4 -0.2 4.2 -0.2 Q2.8 -0.2 2.8 1.2 L2.8 7.2 Q2.8 9.2 4.5 9.2 Q6.2 9.2 6.2 7.2 L6.2 2.6" fill="none" stroke="#2a2a2a" stroke-width="0.75"/></g></svg>
<svg class="a" style="left:548px;top:139.15px;opacity:1" width="8" height="8" viewBox="0 0 8 8"><defs><linearGradient id="cg_red" x1="0" y1="0" x2="0" y2="1"><stop offset="0" stop-color="#ffa8a8"/><stop offset="0.5" stop-color="#f21414"/><stop offset="1" stop-color="#ffa8a8"/></linearGradient></defs><circle cx="4" cy="4" r="3.5" fill="url(#cg_red)" stroke="#a81010" stroke-width="0.8"/></svg>
<div class="t b" style="left:123.0px;top:149.80px">5670808</div>
<div class="t b" style="left:157.89999999999998px;top:149.80px;transform:scaleX(0.915) translateZ(0)">Dodávka světelných mečů</div>
<div class="t b" style="left:260.5px;top:149.80px;transform:scaleX(0.915) translateZ(0)">Řád rytířů Jedi</div>
<div class="t b" style="left:377.4px;top:149.80px">18.07.2017 12:59:19</div>
<div class="t b" style="left:449.09999999999997px;top:149.80px">18.07.2017 12:59:47</div>
<svg class="a" style="left:524.2px;top:152.45px;opacity:1" width="8" height="8" viewBox="0 0 8 8"><defs><linearGradient id="cg_green" x1="0" y1="0" x2="0" y2="1"><stop offset="0" stop-color="#b8ffa8"/><stop offset="0.5" stop-color="#1ed40c"/><stop offset="1" stop-color="#b8ffa8"/></linearGradient></defs><circle cx="4" cy="4" r="3.5" fill="url(#cg_green)" stroke="#14900a" stroke-width="0.8"/></svg>
<svg class="a" style="left:548px;top:152.45px;opacity:1" width="8" height="8" viewBox="0 0 8 8"><defs><linearGradient id="cg_red" x1="0" y1="0" x2="0" y2="1"><stop offset="0" stop-color="#ffa8a8"/><stop offset="0.5" stop-color="#f21414"/><stop offset="1" stop-color="#ffa8a8"/></linearGradient></defs><circle cx="4" cy="4" r="3.5" fill="url(#cg_red)" stroke="#a81010" stroke-width="0.8"/></svg>
<div class="t b" style="left:123.0px;top:163.10px">5670825</div>
<div class="t b" style="left:157.89999999999998px;top:163.10px;transform:scaleX(0.915) translateZ(0)">Re: Reklamace dřeváků</div>
<div class="t b" style="left:260.5px;top:163.10px;transform:scaleX(0.915) translateZ(0)">Ministerstvo hloupé chůze</div>
<div class="t b" style="left:377.4px;top:163.10px">18.07.2017 13:02:56</div>
<div class="t b" style="left:449.09999999999997px;top:163.10px">18.07.2017 13:03:01</div>
<svg class="a" style="left:524.2px;top:165.75px;opacity:1" width="8" height="8" viewBox="0 0 8 8"><defs><linearGradient id="cg_green" x1="0" y1="0" x2="0" y2="1"><stop offset="0" stop-color="#b8ffa8"/><stop offset="0.5" stop-color="#1ed40c"/><stop offset="1" stop-color="#b8ffa8"/></linearGradient></defs><circle cx="4" cy="4" r="3.5" fill="url(#cg_green)" stroke="#14900a" stroke-width="0.8"/></svg>
<svg class="a" style="left:548px;top:165.75px;opacity:1" width="8" height="8" viewBox="0 0 8 8"><defs><linearGradient id="cg_red" x1="0" y1="0" x2="0" y2="1"><stop offset="0" stop-color="#ffa8a8"/><stop offset="0.5" stop-color="#f21414"/><stop offset="1" stop-color="#ffa8a8"/></linearGradient></defs><circle cx="4" cy="4" r="3.5" fill="url(#cg_red)" stroke="#a81010" stroke-width="0.8"/></svg>
<div class="btn" style="left:121.2px;top:185.4px;width:73.8px;height:17.2px"></div>
<svg class="a" style="left:123px;top:187px" width="15" height="14" viewBox="0 0 15 14"><path d="M1 1.5 L6.5 1 L14 8.5 L8.5 13.5 L1.2 6.5 Z" fill="#f5b21c" stroke="#d08a08" stroke-width="0.7"/><circle cx="3.6" cy="3.8" r="1.1" fill="#fff" stroke="#c07a00" stroke-width="0.4"/><path d="M3 2.5 Q1 4.5 2.2 9" fill="none" stroke="#7d8fa5" stroke-width="0.9"/></svg>
<div class="t" style="left:141px;top:187.2px;transform:scaleX(0.94) translateZ(0)">Detail podpisu</div>
<div class="btn" style="left:199.4px;top:185.4px;width:67.6px;height:17.2px"></div>
<svg class="a" style="left:203.3px;top:190px" width="8.5" height="8.5" viewBox="0 0 8.5 8.5"><defs><radialGradient id="yb" cx="0.5" cy="0.4" r="0.6"><stop offset="0" stop-color="#ffff80"/><stop offset="1" stop-color="#e8d800"/></radialGradient></defs><circle cx="4.25" cy="4.25" r="3.8" fill="url(#yb)" stroke="#a89a00" stroke-width="0.6"/></svg>
<div class="t" style="left:213.7px;top:187.2px">Vyřizuje se</div>
<svg class="a" style="left:258px;top:192.8px" width="5" height="3" viewBox="0 0 5 3"><path d="M0 0 L5 0 L2.5 3 Z" fill="#1e1e1e"/></svg>
<div class="btn" style="left:426.5px;top:185.5px;width:18.6px;height:17.6px"></div>
<svg class="a" style="left:429px;top:187.8px" width="14" height="13" viewBox="0 0 14 13"><rect x="0.5" y="3.8" width="13" height="8.6" rx="1" fill="url(#tg)" stroke="#b4b3af" stroke-width="0.7"/><path d="M1 4.3 L7 8.6 L13 4.3" fill="none" stroke="#c4c3bf" stroke-width="0.6"/><path d="M5.8 0.3 L8.2 0.3 L8.2 3.6 L10.2 3.6 L7 7.4 L3.8 3.6 L5.8 3.6 Z" fill="#f5a80e"/></svg>
<div class="btn" style="left:449.5px;top:185.5px;width:18.6px;height:17.6px"></div>
<svg class="a" style="left:452.6px;top:187.6px" width="12.4" height="12" viewBox="0 0 12.4 12"><path d="M0.3 0.3 L10.6 0.3 L12.1 1.8 L12.1 11.7 L0.3 11.7 Z" fill="#141414"/><rect x="2.6" y="0.3" width="6.6" height="4" fill="#c9d3dc"/><rect x="6.6" y="0.9" width="1.4" height="2.6" fill="#141414"/><rect x="1.8" y="6.6" width="8.8" height="4.4" fill="#f4f4f4"/><rect x="2.4" y="7.6" width="1.6" height="2.4" fill="#141414"/></svg>
<div class="btn" style="left:472.4px;top:185.5px;width:17.9px;height:17.6px;border-color:#cfcbc6;background:linear-gradient(#f6f5f3,#efedea)"></div>
<svg class="a" style="left:475.3px;top:187.6px" width="12.4" height="12" viewBox="0 0 12.4 12"><path d="M0.6 0.6 L10.4 0.6 L11.8 2 L11.8 11.4 L0.6 11.4 Z" fill="#f2f1ef" stroke="#9c9c9a" stroke-width="1.1"/><rect x="2.8" y="0.6" width="6.4" height="4" fill="none" stroke="#9c9c9a" stroke-width="1"/><rect x="6.8" y="1.2" width="1.2" height="2.4" fill="#9c9c9a"/><rect x="2" y="6.8" width="8.4" height="4.4" fill="none" stroke="#9c9c9a" stroke-width="1"/></svg>
<div class="btn" style="left:495.4px;top:185.5px;width:17.9px;height:17.6px;border-color:#d3cfca;background:linear-gradient(#f6f5f3,#efedea)"></div>
<svg class="a" style="left:497.6px;top:189px" width="13" height="11" viewBox="0 0 13 11"><path d="M0.5 1.5 L4.5 1.5 L5.5 2.8 L11 2.8 L11 10.5 L0.5 10.5 Z" fill="#cfcdca" stroke="#bdbbb8" stroke-width="0.5"/><path d="M1.8 4.6 L12.6 4.6 L11 10.5 L0.5 10.5 Z" fill="#e0dedb" stroke="#c4c2bf" stroke-width="0.5"/></svg>
<div class="pan" style="left:120.7px;top:206.3px;width:303.3px;height:198px;border-radius:1px"></div>
<div class="a" style="left:414.6px;top:207.7px;width:8.6px;height:194.5px;background:#f5f4f2;border-left:1px solid #d6d2cd"></div>
<div class="a" style="left:415.6px;top:216px;width:7.6px;height:178px;background:#dfddd9"></div>
<div class="a" style="left:415.4px;top:215.5px;width:7.8px;height:87px;background:#f8f7f5;border:1px solid #cdc9c4;border-radius:1px"></div>
<svg class="a" style="left:416.8px;top:210.3px" width="5" height="3" viewBox="0 0 5 3"><path d="M0 3 L5 3 L2.5 0 Z" fill="#1e1e1e"/></svg>
<svg class="a" style="left:416.8px;top:397.5px" width="5" height="3" viewBox="0 0 5 3"><path d="M0 0 L5 0 L2.5 3 Z" fill="#1e1e1e"/></svg>
<div class="t b" style="left:130.9px;top:208.9px;font-size:9.3px;transform:scaleX(1.0) translateZ(0);-webkit-text-stroke:0.3px #111">Identifikace</div>
<div class="t" style="left:130.9px;top:227.00px;font-size:8.3px;line-height:10px;height:10px;transform:scaleX(0.9) translateZ(0);-webkit-text-stroke:0.24px #222"><b style="-webkit-text-stroke:0.24px #000;color:#000">ID zprávy:</b> 5670762</div>
<div class="t" style="left:130.9px;top:237.20px;font-size:8.3px;line-height:10px;height:10px;transform:scaleX(0.9) translateZ(0);-webkit-text-stroke:0.24px #222"><b style="-webkit-text-stroke:0.24px #000;color:#000">Předmět:</b> Reklamace dřeváků</div>
<div class="t" style="left:130.9px;top:268.90px;font-size:8.3px;line-height:10px;height:10px;transform:scaleX(0.9) translateZ(0);-webkit-text-stroke:0.24px #222"><b style="-webkit-text-stroke:0.24px #000;color:#000">Odesílatel:</b> Ministerstvo hloupé chůze</div>
<div class="t" style="left:130.9px;top:279.00px;font-size:8.3px;line-height:10px;height:10px;transform:scaleX(0.9) translateZ(0);-webkit-text-stroke:0.24px #222"><b style="-webkit-text-stroke:0.24px #000;color:#000">ID datové schránky odesílatele:</b> uxidq2y</div>
<div class="t" style="left:130.9px;top:288.80px;font-size:8.3px;line-height:10px;height:10px;transform:scaleX(0.9) translateZ(0);-webkit-text-stroke:0.24px #222"><b style="-webkit-text-stroke:0.24px #000;color:#000">Typ datové schránky:</b> Orgán veřejné moci (OVM)</div>
<div class="t" style="left:130.9px;top:298.70px;font-size:8.3px;line-height:10px;height:10px;transform:scaleX(0.9) translateZ(0);-webkit-text-stroke:0.24px #222"><b style="-webkit-text-stroke:0.24px #000;color:#000">Adresa odesílatele:</b> Vycházková 1396/26, 66451 Šlapanice, CZ</div>
<div class="t" style="left:130.9px;top:308.60px;font-size:8.3px;line-height:10px;height:10px;transform:scaleX(0.9) translateZ(0);-webkit-text-stroke:0.24px #222"><b style="-webkit-text-stroke:0.24px #000;color:#000">Odesílající osoba:</b> Klotilda Hermenegilda Procházková, Oprávněná osoba</div>
<div class="t" style="left:130.9px;top:340.80px;font-size:8.3px;line-height:10px;height:10px;transform:scaleX(0.9) translateZ(0);-webkit-text-stroke:0.24px #222"><b style="-webkit-text-stroke:0.24px #000;color:#000">Příjemce:</b> Barbucha Holding</div>
<div class="t" style="left:130.9px;top:351.10px;font-size:8.3px;line-height:10px;height:10px;transform:scaleX(0.9) translateZ(0);-webkit-text-stroke:0.24px #222"><b style="-webkit-text-stroke:0.24px #000;color:#000">ID datové schránky příjemce:</b> qrdae26</div>
<div class="t" style="left:130.9px;top:361.00px;font-size:8.3px;line-height:10px;height:10px;transform:scaleX(0.9) translateZ(0);-webkit-text-stroke:0.24px #222"><b style="-webkit-text-stroke:0.24px #000;color:#000">Adresa příjemce:</b> Americká 23, 12000 Praha 2, CZ</div>
<div class="t" style="left:130.9px;top:371.30px;font-size:8.3px;line-height:10px;height:10px;transform:scaleX(0.9) translateZ(0);-webkit-text-stroke:0.24px #222"><b style="-webkit-text-stroke:0.24px #000;color:#000">Doručení do vlastních rukou:</b> Ne</div>
<div class="t" style="left:130.9px;top:381.60px;font-size:8.3px;line-height:10px;height:10px;transform:scaleX(0.9) translateZ(0);-webkit-text-stroke:0.24px #222"><b style="-webkit-text-stroke:0.24px #000;color:#000">Doručení fikcí povoleno:</b> Ano</div>
<div class="pan" style="left:426.3px;top:206.3px;width:200.2px;height:198px;border-right:none;border-radius:1px 0 0 1px"></div>
<div class="hdr" style="left:427.3px;top:207.7px;width:199.2px;height:12.8px"></div>
<div class="sep" style="left:485px;top:208.2px;height:11.5px"></div>
<div class="t" style="left:430.9px;top:207.5px">Název souboru</div>
<div class="t" style="left:527.4px;top:207.5px;transform:scaleX(0.945) translateZ(0)">Velikost souboru</div>
<div class="t" style="left:429px;top:220.60px;transform:scaleX(0.935) translateZ(0)">pdf.pdf</div>
<div class="t n" style="left:487.6px;top:220.60px">433994</div>
<div class="t" style="left:429px;top:233.90px;transform:scaleX(0.935) translateZ(0)">datovka-ok.png</div>
<div class="t n" style="left:487.6px;top:233.90px">878</div>
<div class="t" style="left:429px;top:247.20px;transform:scaleX(0.935) translateZ(0)">dokument.docx</div>
<div class="t n" style="left:487.6px;top:247.20px">219228</div>
<div class="t" style="left:429px;top:260.50px;transform:scaleX(0.935) translateZ(0)">n.xml</div>
<div class="t n" style="left:487.6px;top:260.50px">4444</div>
<div class="t" style="left:429px;top:273.80px;transform:scaleX(0.935) translateZ(0)">pokusný text.txt</div>
<div class="t n" style="left:487.6px;top:273.80px">710</div>
<div class="t" style="left:429px;top:287.10px;transform:scaleX(0.935) translateZ(0)">sample.xlsx</div>
<div class="t n" style="left:487.6px;top:287.10px">97629</div>
<div class="t" style="left:429px;top:300.40px;transform:scaleX(0.935) translateZ(0)">test.mpeg</div>
<div class="t n" style="left:487.6px;top:300.40px">800459</div>
<svg class="a" style="left:368.8px;top:183.2px" width="12" height="1"><rect x="0" y="0" width="1" height="1" fill="#cdc9c4"/><rect x="2" y="0" width="1" height="1" fill="#cdc9c4"/><rect x="4" y="0" width="1" height="1" fill="#cdc9c4"/><rect x="6" y="0" width="1" height="1" fill="#cdc9c4"/><rect x="8" y="0" width="1" height="1" fill="#cdc9c4"/><rect x="10" y="0" width="1" height="1" fill="#cdc9c4"/></svg>
<svg class="a" style="left:119.2px;top:227px" width="1" height="10"><rect x="0" y="0" width="1" height="1" fill="#d6d2cd"/><rect x="0" y="2" width="1" height="1" fill="#d6d2cd"/><rect x="0" y="4" width="1" height="1" fill="#d6d2cd"/><rect x="0" y="6" width="1" height="1" fill="#d6d2cd"/><rect x="0" y="8" width="1" height="1" fill="#d6d2cd"/></svg>
<svg class="a" style="left:424.8px;top:290px" width="1" height="10"><rect x="0" y="0" width="1" height="1" fill="#d6d2cd"/><rect x="0" y="2" width="1" height="1" fill="#d6d2cd"/><rect x="0" y="4" width="1" height="1" fill="#d6d2cd"/><rect x="0" y="6" width="1" height="1" fill="#d6d2cd"/><rect x="0" y="8" width="1" height="1" fill="#d6d2cd"/></svg>
<div class="t" style="left:327.2px;top:406.5px;transform:scaleX(0.955) translateZ(0)">Úložiště: disk | disk</div>
<div class="t" style="left:402.6px;top:406.5px;transform:scaleX(0.93) translateZ(0)">Režim: připojeno (online)</div>
<div class="a" style="left:491.4px;top:406.7px;width:120px;height:13.8px;background:#fff;border:1px solid #c3bfba;border-radius:1px"></div>
<div class="t" style="left:544.5px;top:406.9px">Idle</div>
<svg class="a" style="left:617px;top:413px" width="8" height="8"><rect x="6" y="0" width="1" height="1" fill="#c4c0bb"/><rect x="4" y="2" width="1" height="1" fill="#c4c0bb"/><rect x="6" y="2" width="1" height="1" fill="#c4c0bb"/><rect x="2" y="4" width="1" height="1" fill="#c4c0bb"/><rect x="4" y="4" width="1" height="1" fill="#c4c0bb"/><rect x="6" y="4" width="1" height="1" fill="#c4c0bb"/><rect x="0" y="6" width="1" height="1" fill="#c4c0bb"/><rect x="2" y="6" width="1" height="1" fill="#c4c0bb"/><rect x="4" y="6" width="1" height="1" fill="#c4c0bb"/><rect x="6" y="6" width="1" height="1" fill="#c4c0bb"/></svg>
<div class="a" style="left:0;top:14px;width:0.8px;height:409px;background:#a9a6a2"></div>
<div class="a" style="left:625.8px;top:14px;width:0.8px;height:409px;background:#a9a6a2"></div>
<div class="a" style="left:0;top:421.3px;width:626.5px;height:1px;background:#fbfaf9"></div>
<div class="a" style="left:0;top:422.2px;width:626.5px;height:0.8px;background:#8f8d8a"></div>
</div>
</body></html>
